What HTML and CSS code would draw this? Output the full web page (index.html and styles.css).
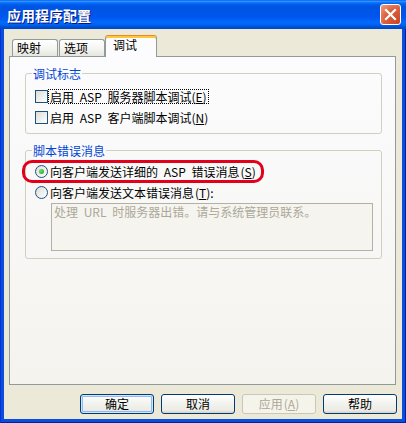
FILE: index.html
```html
<!DOCTYPE html>
<html lang="zh-CN">
  <head>
    <meta charset="UTF-8" />
    <title>应用程序配置</title>
    <link rel="stylesheet" href="styles.css">
  </head>
  <body>
    <div class="window">
      <div class="titlebar">
        <span class="title">应用程序配置</span>
        <button class="close">
          <svg width="13" height="13" viewBox="0 0 13 13">
            <path d="M2 2 L11 11 M11 2 L2 11" stroke="#fff" stroke-width="2.2" stroke-linecap="square" />
          </svg>
        </button>
      </div>

      <div class="client">
        <div class="tabs">
          <div class="tab">映射</div>
          <div class="tab">选项</div>
          <div class="tab active">调试</div>
        </div>

        <div class="panel">
          <fieldset class="group">
            <legend>调试标志</legend>
            <div class="opt">
              <span class="check"></span>
              <span class="focus">启用 ASP 服务器脚本调试(<u>E</u>)</span>
            </div>
            <div class="opt">
              <span class="check"></span>
              <span>启用 ASP 客户端脚本调试(<u>N</u>)</span>
            </div>
          </fieldset>

          <fieldset class="group">
            <legend>脚本错误消息</legend>
            <div class="highlight">
              <div class="opt">
                <span class="radio on"></span>
                <span>向客户端发送详细的 ASP 错误消息<span class="key">(<u>S</u>)</span></span>
              </div>
            </div>
            <div class="opt second">
              <span class="radio"></span>
              <span>向客户端发送文本错误消息<span class="key">(<u>T</u>)</span>:</span>
            </div>
            <div class="msgbox">处理 URL 时服务器出错。请与系统管理员联系。</div>
          </fieldset>
        </div>

        <div class="buttons">
          <button class="btn default">确定</button>
          <button class="btn">取消</button>
          <button class="btn disabled">应用<span class="key">(<u>A</u>)</span></button>
          <button class="btn">帮助</button>
        </div>
      </div>
    </div>
  </body>
</html>
```

FILE: styles.css
```css
body {
  margin: 0;
  font-family: "Noto Sans CJK SC", sans-serif;
  font-size: 12px;
  word-spacing: 3px;
  color: #000;
}
.window {
  width: 406px;
  height: 423px;
  display: flex;
  flex-direction: column;
  background: #0a4fdc;
  box-shadow: inset 1px 0 #0831d9, inset -1px 0 #001ea0, inset 0 -1px #001ea0;
}
.titlebar {
  height: 29px;
  flex: none;
  display: flex;
  align-items: center;
  justify-content: space-between;
  padding: 0 5px 0 7px;
  background: linear-gradient(
    #0058ee 0%,
    #3593ff 4%,
    #288eff 6%,
    #127dff 8%,
    #036ffc 10%,
    #0262ee 14%,
    #0057e5 20%,
    #0054e3 24%,
    #0055eb 56%,
    #005bf5 66%,
    #026afe 76%,
    #0062ef 86%,
    #0052d6 92%,
    #0046c4 100%
  );
}
.title {
  color: white;
  font-weight: bold;
  font-size: 14px;
  text-shadow: 1px 1px #0a1883;
}
.close {
  width: 21px;
  height: 21px;
  padding: 0;
  border: 1px solid white;
  border-radius: 3px;
  background: radial-gradient(circle at 90% 90%, #cc4626 0%, #dc5e3a 55%, #f0a085 100%);
  display: flex;
  align-items: center;
  justify-content: center;
}
.client {
  flex: 1;
  margin: 0 4px 4px;
  background: #ece9d8;
  padding: 6px 6px 5px 5px;
  display: flex;
  flex-direction: column;
}
.tabs {
  height: 21px;
  flex: none;
  display: flex;
  align-items: flex-end;
  padding-left: 3px;
  position: relative;
  z-index: 1;
}
.tab {
  width: 46px;
  height: 17px;
  box-sizing: border-box;
  border: 1px solid #919b9c;
  border-bottom: none;
  border-radius: 3px 3px 0 0;
  background: linear-gradient(#ffffff, #f3f3ef 60%, #e6e5de);
  padding-left: 4px;
  line-height: 16px;
}
.tab + .tab {
  margin-left: 1px;
}
.tab.active {
  width: 52px;
  height: 22px;
  margin-left: 0;
  margin-bottom: -1px;
  background: #fcfcfe;
  border-top-color: #e68b2c;
  box-shadow: inset 0 2px #ffc83c;
  padding: 2px 0 0 7px;
  line-height: 13px;
}
.panel {
  flex: 1;
  border: 1px solid #919b9c;
  background: linear-gradient(#fcfcfe, #f4f3ee);
  padding: 10px 13px 0 15px;
}
.group {
  margin: 0;
  border: 1px solid #d0d0bf;
  border-radius: 3px;
  padding: 10px 8px 9px 9px;
}
.group + .group {
  margin-top: 10px;
  padding-top: 3px;
  padding-bottom: 7px;
}
.group legend {
  color: #0046d5;
  line-height: 13px;
  padding: 0 1px;
  margin-left: -3px;
}
.opt {
  display: flex;
  align-items: center;
  height: 13px;
  line-height: 13px;
  white-space: nowrap;
}
.opt + .opt {
  margin-top: 8px;
}
.opt.second {
  margin-top: 3px;
}
.key {
  margin-left: 1px;
}
.check,
.radio {
  width: 13px;
  height: 13px;
  box-sizing: border-box;
  border: 1px solid #1c5180;
  background: linear-gradient(135deg, #dcdcd7, #ffffff);
  margin-right: 2px;
  flex: none;
}
.radio {
  border-radius: 50%;
  display: flex;
  align-items: center;
  justify-content: center;
}
.radio.on::after {
  content: "";
  width: 5px;
  height: 5px;
  border-radius: 50%;
  background: radial-gradient(circle at 35% 35%, #6edc6a, #21a121);
}
.focus {
  outline: 1px dotted #000;
  padding: 0 1px;
  margin-left: -1px;
}
u {
  text-decoration-thickness: 1px;
}
.highlight {
  width: fit-content;
  border: 3px solid #e2001a;
  border-radius: 10px;
  margin-left: -13px;
  padding: 2px 5px 2px 10px;
}
.msgbox {
  margin: 4px 0 0 16px;
  height: 48px;
  box-sizing: border-box;
  border: 1px solid #b2b1a5;
  background: #f5f4ef;
  color: #aca899;
  padding: 1px 2px;
  line-height: 14px;
}
.buttons {
  flex: none;
  display: flex;
  justify-content: flex-end;
  gap: 7px;
  margin: 9px -1px 0 0;
}
.btn {
  width: 74px;
  height: 20px;
  padding: 0;
  font-family: inherit;
  font-size: 12px;
  line-height: 18px;
  word-spacing: 0;
  color: #000;
  border: 1px solid #003c74;
  border-radius: 3px;
  background: linear-gradient(#ffffff, #f4f4f0 40%, #ecebe6 85%, #d6d0c5);
}
.btn.default {
  box-shadow: inset 0 0 0 1px #cee7ff, inset 0 0 0 2px #98b8ea;
}
.btn.disabled {
  border-color: #c9c7ba;
  background: #f5f4ea;
  color: #aca899;
}
```
